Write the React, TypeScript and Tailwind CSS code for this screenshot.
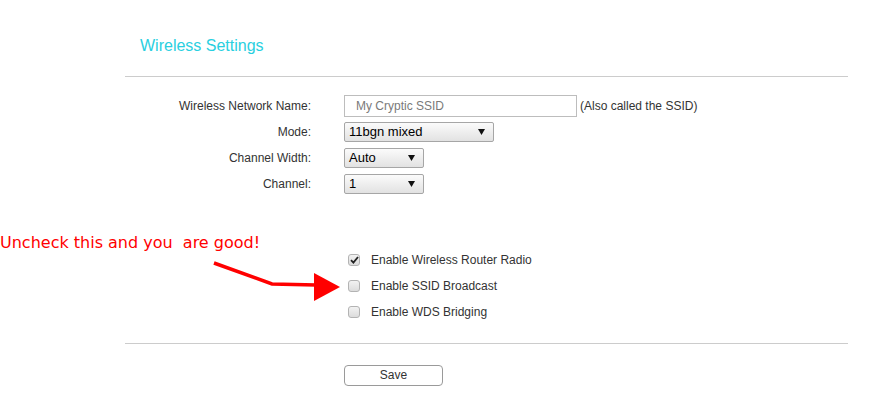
import React from 'react';

function Select({ value, width }: { value: string; width: string }) {
  return (
    <div
      className={`${width} h-[20px] flex items-center justify-between pl-[4px] pr-[8px] border border-[#a6a6a6] rounded-[2px] bg-gradient-to-b from-[#fbfbfb] to-[#e2e2e2] text-[13px] text-black`}
    >
      <span>{value}</span>
      <svg width="7" height="6" viewBox="0 0 7 6">
        <polygon points="0,0 7,0 3.5,6" fill="#111" />
      </svg>
    </div>
  );
}

function Check({ label, checked }: { label: string; checked?: boolean }) {
  return (
    <div className="h-[26px] flex items-center pl-[4px] gap-[11px]">
      <span className="w-[12px] h-[12px] rounded-[3px] border border-[#b3b3b3] bg-gradient-to-b from-[#f2f2f2] to-[#dcdcdc] flex items-center justify-center">
        {checked && (
          <svg width="9" height="8" viewBox="0 0 9 8">
            <path d="M1 4.2 L3.4 6.6 L8 1" stroke="#222" strokeWidth="1.8" fill="none" />
          </svg>
        )}
      </span>
      <span className="text-[12px] text-[#333]">{label}</span>
    </div>
  );
}

export default function App() {
  const labels = ['Wireless Network Name:', 'Mode:', 'Channel Width:', 'Channel:'];

  return (
    <div className="relative w-[869px] h-[409px] bg-white font-['Liberation_Sans',Arial,sans-serif] overflow-hidden">
      <div className="ml-[125px] w-[723px]">
        <div className="pt-[36px] pb-[20px] pl-[15px] border-b border-[#cccccc]">
          <h1 className="text-[16px] leading-[20px] text-[#29cfe0]">Wireless Settings</h1>
        </div>

        <div className="pb-[18px] border-b border-[#cccccc]">
          <div className="pt-[16px] grid grid-cols-[186px_1fr] gap-x-[33px]">
            <div className="flex flex-col">
              {labels.map((l) => (
                <div key={l} className="h-[26px] flex items-center justify-end text-[12px] text-[#333]">
                  {l}
                </div>
              ))}
            </div>
            <div className="flex flex-col">
              <div className="h-[26px] flex items-center">
                <div className="w-[233px] h-[22px] border border-[#bdbdbd] flex items-center pl-[11px] text-[12px] text-[#7a7a7a]">
                  My Cryptic SSID
                </div>
                <span className="ml-[3px] text-[12px] text-[#333]">(Also called the SSID)</span>
              </div>
              <div className="h-[26px] flex items-center">
                <Select value="11bgn mixed" width="w-[150px]" />
              </div>
              <div className="h-[26px] flex items-center">
                <Select value="Auto" width="w-[80px]" />
              </div>
              <div className="h-[26px] flex items-center">
                <Select value="1" width="w-[80px]" />
              </div>
            </div>
          </div>

          <div className="mt-[50px] ml-[219px] flex flex-col">
            <Check label="Enable Wireless Router Radio" checked />
            <Check label="Enable SSID Broadcast" />
            <Check label="Enable WDS Bridging" />
          </div>
        </div>

        <div className="pt-[18px] pl-[219px]">
          <button className="w-[99px] h-[21px] rounded-[4px] border border-[#9a9a9a] bg-white text-[12px] text-[#333] leading-none">
            Save
          </button>
        </div>
      </div>

      <div className="absolute left-0 top-[233px] whitespace-pre text-[16px] leading-[20px] text-[#ff0000] font-['DejaVu_Sans',sans-serif]">
        Uncheck this and you  are good!
      </div>

      <svg className="absolute left-0 top-0" width="869" height="409" viewBox="0 0 869 409">
        <polyline points="214,263 272,284 316,285" stroke="#ff0000" strokeWidth="3.5" fill="none" />
        <polygon points="314,273 340,287 314,301" fill="#ff0000" />
      </svg>
    </div>
  );
}
